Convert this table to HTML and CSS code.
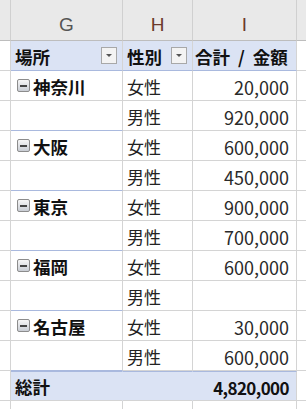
FILE: index.html
```html
<!DOCTYPE html>
<html lang="ja">
<head>
<meta charset="utf-8">
<link rel="stylesheet" href="styles.css">
</head>
<body>
<div class="sheet">
  <div class="ch ch-first"></div>
  <div class="ch">G</div>
  <div class="ch ch-sel">H</div>
  <div class="ch ch-sel">I</div>
  <div class="ch ch-last"></div>

  <div class="c edge"></div>
  <div class="c hd"><span class="bold">場所</span><span class="dd"><span class="tri"></span></span></div>
  <div class="c hd"><span class="bold">性別</span><span class="dd"><span class="tri"></span></span></div>
  <div class="c hd right"><span class="bold wide">合計 / 金額</span></div>
  <div class="c edge-r"></div>

  <div class="c edge"></div>
  <div class="c g grp"><span class="btn"><span class="minus"></span></span><span class="bold">神奈川</span></div>
  <div class="c">女性</div>
  <div class="c num">20,000</div>
  <div class="c edge-r"></div>

  <div class="c edge"></div>
  <div class="c g sep"></div>
  <div class="c">男性</div>
  <div class="c num">920,000</div>
  <div class="c edge-r"></div>

  <div class="c edge"></div>
  <div class="c g grp"><span class="btn"><span class="minus"></span></span><span class="bold">大阪</span></div>
  <div class="c">女性</div>
  <div class="c num">600,000</div>
  <div class="c edge-r"></div>

  <div class="c edge"></div>
  <div class="c g sep"></div>
  <div class="c">男性</div>
  <div class="c num">450,000</div>
  <div class="c edge-r"></div>

  <div class="c edge"></div>
  <div class="c g grp"><span class="btn"><span class="minus"></span></span><span class="bold">東京</span></div>
  <div class="c">女性</div>
  <div class="c num">900,000</div>
  <div class="c edge-r"></div>

  <div class="c edge"></div>
  <div class="c g sep"></div>
  <div class="c">男性</div>
  <div class="c num">700,000</div>
  <div class="c edge-r"></div>

  <div class="c edge"></div>
  <div class="c g grp"><span class="btn"><span class="minus"></span></span><span class="bold">福岡</span></div>
  <div class="c">女性</div>
  <div class="c num">600,000</div>
  <div class="c edge-r"></div>

  <div class="c edge"></div>
  <div class="c g sep"></div>
  <div class="c">男性</div>
  <div class="c num"></div>
  <div class="c edge-r"></div>

  <div class="c edge"></div>
  <div class="c g grp"><span class="btn"><span class="minus"></span></span><span class="bold">名古屋</span></div>
  <div class="c">女性</div>
  <div class="c num">30,000</div>
  <div class="c edge-r"></div>

  <div class="c edge"></div>
  <div class="c g sep"></div>
  <div class="c">男性</div>
  <div class="c num">600,000</div>
  <div class="c edge-r"></div>

  <div class="c edge"></div>
  <div class="c tot tot-a"><span class="bold">総計</span></div>
  <div class="c tot tot-b"></div>
  <div class="c tot num"><span class="bold numb">4,820,000</span></div>
  <div class="c edge-r"></div>

  <div class="c edge"></div>
  <div class="c"></div>
  <div class="c"></div>
  <div class="c"></div>
  <div class="c edge-r"></div>
</div>
</body>
</html>
```

FILE: styles.css
```css
html, body {
  margin: 0;
  padding: 0;
  background: #ffffff;
}

.sheet {
  width: 306px;
  height: 409px;
  overflow: hidden;
  display: grid;
  grid-template-columns: 11px 112px 70px 104px 9px;
  grid-template-rows: 41px repeat(13, 30px);
  font-family: "Noto Sans CJK JP", "Noto Sans", sans-serif;
  font-size: 17px;
  color: #222222;
}

.ch {
  box-sizing: border-box;
  background: #e9e9e9;
  border-right: 1px solid #d0d0d0;
  border-bottom: 1px solid #bdbdbd;
  display: flex;
  align-items: flex-end;
  justify-content: center;
  padding-bottom: 4px;
  font-family: "Liberation Sans", Arial, sans-serif;
  font-size: 19px;
  color: #555555;
}

.ch-sel {
  color: #6b3a2c;
}

.ch-last {
  border-right: none;
}

.c {
  box-sizing: border-box;
  border-right: 1px solid #d4d4d4;
  border-bottom: 1px solid #d4d4d4;
  display: flex;
  align-items: center;
  padding: 2px 4px 0 4px;
  white-space: nowrap;
  line-height: 1;
}

.edge-r {
  border-right: none;
}

.hd {
  background: #dbe3f4;
  border-bottom-color: #a9b9de;
  justify-content: space-between;
  padding-right: 5px;
}

.hd.right {
  justify-content: flex-start;
  padding-left: 2px;
}

.bold {
  font-weight: bold;
  font-size: 17.5px;
  color: #111111;
}

.wide {
  word-spacing: 4px;
}

.g {
  padding-left: 6px;
}

.sep {
  border-bottom-color: #a9b9de;
}

.num {
  justify-content: flex-end;
  padding-right: 7px;
  font-size: 18px;
  color: #2a2a2a;
}

.numb {
  font-size: 17px;
  letter-spacing: -0.6px;
}

.tot {
  background: #dbe3f4;
  border-top: 1px solid #a9b9de;
}

.tot-a,
.tot-b {
  border-right-color: #dbe3f4;
}

.dd {
  box-sizing: border-box;
  width: 16px;
  height: 17px;
  border: 1px solid #a8a8a8;
  background: #f3f3f3;
  display: flex;
  align-items: center;
  justify-content: center;
  margin-top: -2px;
}

.tri {
  width: 0;
  height: 0;
  border-left: 3px solid transparent;
  border-right: 3px solid transparent;
  border-top: 3px solid #555555;
}

.btn {
  box-sizing: border-box;
  width: 13px;
  height: 13px;
  border: 1px solid #8c8c8c;
  border-radius: 2px;
  background: linear-gradient(#f6f6f6, #c9cdd4);
  display: flex;
  align-items: center;
  justify-content: center;
  margin-right: 3px;
  margin-top: -2px;
}

.minus {
  width: 7px;
  height: 2px;
  background: #444444;
}
```
